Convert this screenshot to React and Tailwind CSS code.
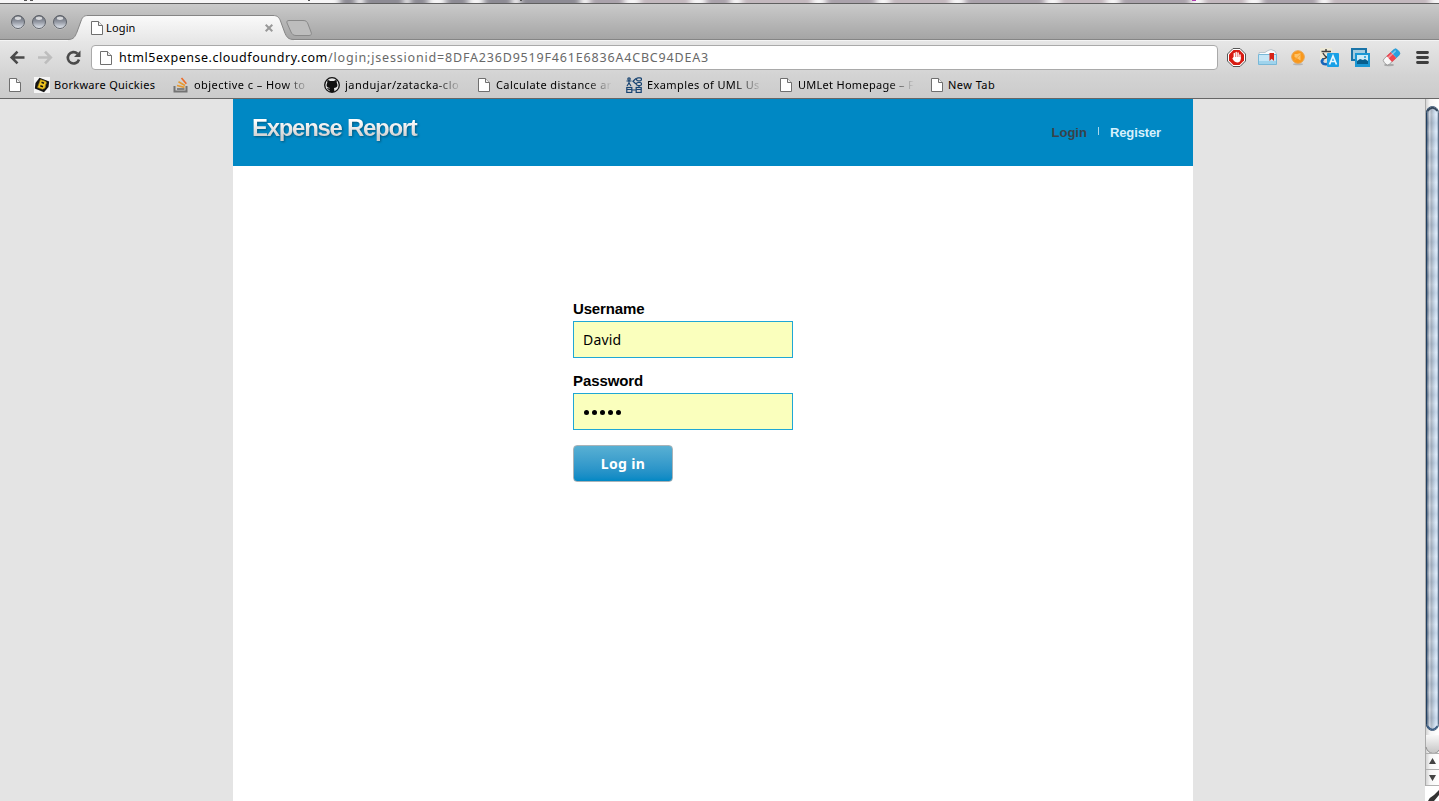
import React from "react";

const ui = "font-['Noto_Sans','Open_Sans',sans-serif]";

function Page({ className = "" }) {
  return (
    <svg width="12" height="14" viewBox="0 0 12 14" className={"shrink-0 " + className}>
      <path d="M.5 .5H7.5L11.5 4.5V13.5H.5Z" fill="#fff" stroke="#6f6f6f" />
      <path d="M7.5 .5V4.5H11.5" fill="#eee" stroke="#6f6f6f" />
    </svg>
  );
}

function Light({ id }) {
  return (
    <svg width="16" height="16" viewBox="0 0 16 16" className="shrink-0">
      <defs>
        <linearGradient id={id} x1="0" y1="0" x2="0" y2="1">
          <stop offset="0" stopColor="#5f646d" />
          <stop offset=".5" stopColor="#9499a4" />
          <stop offset="1" stopColor="#e6ebf2" />
        </linearGradient>
      </defs>
      <circle cx="8" cy="8.6" r="7" fill="#ddd" opacity=".6" />
      <circle cx="8" cy="8" r="6.500" fill={"url(#" + id + ")"} stroke="#5d6168" />
      <ellipse cx="8" cy="4.200" rx="3.200" ry="1.700" fill="#fff" opacity=".7" />
    </svg>
  );
}

function TabStrip() {
  return (
    <div className="relative flex h-[37px] shrink-0 items-start border-t border-[#606060] bg-linear-to-b from-[#cacaca] to-[#a4a4a4]">
      <svg className="absolute inset-0" width="1439" height="37" viewBox="0 0 1439 37">
        <defs>
          <linearGradient id="tab" x1="0" y1="0" x2="0" y2="1">
            <stop offset="0" stopColor="#fafafa" />
            <stop offset="1" stopColor="#e7e7e7" />
          </linearGradient>
        </defs>
        <path d="M0 35.5H1439" stroke="#858585" />
        <path d="M0 36.5H1439" stroke="#f4f4f4" />
        <path d="M68 37V35.5C74 35.5 75 32.5 77 28L81 17C82.5 13 84 11.5 88 11.5H273C277 11.5 279 13 280.5 17L284.500 28C286.500 33 288 35.500 294 35.500V37Z" fill="url(#tab)" />
        <path d="M68 35.500C74 35.500 75 32.500 77 28L81 17C82.500 13 84 11.500 88 11.500H273C277 11.500 279 13 280.500 17L284.500 28C286.500 33 288 35.500 294 35.500" fill="none" stroke="#858585" />
        <path d="M289 16.500H303C306 16.500 307 17.500 308 20L311 28C312 30.500 311 31.500 309 31.500H296C293 31.500 292 30 291 28L287 19C286.500 17.500 287 16.500 289 16.500Z" fill="#bdbdbd" stroke="#898989" />
      </svg>
      <div className="relative flex gap-[5px] pl-[10px] pt-[10px]">
        <Light id="l1" /><Light id="l2" /><Light id="l3" />
      </div>
      <div className={"relative flex h-[37px] items-center pl-[23px] pt-[11px] text-[11px] text-black " + ui}>
        <Page className="mb-px" />
        <span className="ml-[3px] w-[157px] leading-4 tracking-[0.150px]">Login</span>
        <svg width="10" height="10" viewBox="0 0 10 10" className="ml-px"><path d="M1.700 1.700L8.300 8.300M8.300 1.700L1.700 8.300" stroke="#999" strokeWidth="2" /></svg>
      </div>
    </div>
  );
}

function Extensions() {
  return (
    <svg width="221" height="36" viewBox="1218 40 221 36" className="shrink-0">
      <path d="M1233 48.500H1240L1245.500 54V61L1240 66.500H1233L1227.500 61V54Z" fill="#fff" stroke="#555" />
      <path d="M1233.500 50H1239.500L1244 54.500V60.500L1239.500 65H1233.500L1229 60.500V54.500Z" fill="#d81b12" />
      <path d="M1234.300 58V53.500M1236.200 57V52.500M1238.100 57V53M1240 58.500V55" stroke="#fff" strokeWidth="1.400" strokeLinecap="round" />
      <path d="M1233.600 57H1240.700V59.500C1240.500 61.500 1239 62.500 1237.500 62.500S1234 61.500 1232.300 58.500Z" fill="#fff" />
      <path d="M1259 54V52.500H1265L1268 50.500L1271 49.500L1275 51L1276.500 54V64.500H1259Z" fill="#fafcfe" stroke="#b9c5cc" />
      <path d="M1258.500 54.500H1276.500V64.500H1258.500Z" fill="#c6e6f6" stroke="#78b8d8" />
      <path d="M1259 61H1276V64H1259Z" fill="#9fd3ec" />
      <path d="M1269.500 53H1274V61L1271.700 58.800L1269.500 61Z" fill="#d72316" />
      <ellipse cx="1298" cy="64.200" rx="5" ry="1" fill="#b5b5b5" />
      <circle cx="1298" cy="57" r="6.300" fill="#f9981b" stroke="#eaa550" />
      <path d="M1294.500 54H1297L1300.500 53V60.500L1297.500 58.500L1294.500 57Z" fill="#fdc772" opacity=".9" />
      <path d="M1294.500 60L1301 54" stroke="#f9a83c" />
      <rect x="1320" y="48" width="12" height="12" fill="#ece8d8" />
      <path d="M1326 49V51M1321.500 51.500H1331M1323 53C1325 57 1327 58 1330 59M1329.500 53C1328 57 1325 59 1322 59" fill="none" stroke="#424242" strokeWidth="1.500" />
      <path d="M1323.500 59C1320.500 61 1322 65 1327 64" fill="none" stroke="#1764b8" strokeWidth="2.600" />
      <rect x="1327" y="53" width="12" height="14" rx="1" fill="#18a0e6" />
      <path d="M1329.500 64.500L1333 56L1336.500 64.500M1331 61.500H1335" fill="none" stroke="#e7f7ff" strokeWidth="1.700" />
      <rect x="1352" y="49" width="14" height="11" fill="#a5cde0" stroke="#1a74a8" strokeWidth="2" />
      <rect x="1355" y="53" width="15" height="14" fill="#1a97d4" />
      <rect x="1357" y="55" width="11" height="9" fill="#cdebf7" />
      <path d="M1357 64V61L1360 59L1363 60L1365 59L1368 61V64Z" fill="#075e8d" /><circle cx="1365" cy="57" r="1" fill="#159ad8" />
      <ellipse cx="1389" cy="65" rx="5" ry="1.200" fill="#aaa" />
      <g transform="rotate(-43 1391.500 57)">
        <rect x="1382.500" y="53.200" width="18" height="7.600" rx="2.500" fill="#f6f6f6" stroke="#949494" strokeWidth=".8" />
        <rect x="1388.500" y="53" width="6" height="8" fill="#ee4650" />
        <path d="M1394.500 53H1398.500Q1401 53 1401 55.500V58.500Q1401 61 1398.500 61H1394.500Z" fill="#27a1df" />
        <rect x="1384" y="54.500" width="15" height="1.500" rx=".7" fill="#fff" opacity=".4" />
      </g>
      <path d="M1417.500 52.500H1427.500M1417.500 57.500H1427.500M1417.500 62.500H1427.500" stroke="#3e3e3e" strokeWidth="2.800" strokeLinecap="round" />
    </svg>
  );
}

function Toolbar() {
  return (
    <div className="flex h-9 shrink-0 items-center bg-linear-to-b from-[#e7e7e7] to-[#d3d3d3]">
      <svg width="91" height="36" viewBox="0 0 91 36" className="shrink-0">
        <path d="M12.500 17.500H24.500M17.500 11.700L11.700 17.500L17.500 23.300" fill="none" stroke="#4a4a4a" strokeWidth="2.600" />
        <path d="M38 17.500H50M45 11.700L50.800 17.500L45 23.300" fill="none" stroke="#bdbdbd" strokeWidth="2.600" />
        <path d="M77.500 13.700A5.700 5.700 0 1 0 79 19.500" fill="none" stroke="#4a4a4a" strokeWidth="2.600" />
        <path d="M80.500 10.500V17H74Z" fill="#4a4a4a" />
      </svg>
      <div className={"mb-px flex h-[25px] w-[1127px] items-center rounded-[4px] border border-[#a9a9a9] bg-white pl-[8px] text-[12.5px] text-[#686868] " + ui}>
        <Page />
        <div className="ml-[7px] flex whitespace-nowrap pt-[2px]">
          <span className="w-[209px] tracking-[0.530px] text-black">html5expense.cloudfoundry.com</span>
          <span className="tracking-[0.820px]">/login;jsessionid=8DFA236D9519F461E6836A4CBC94DEA3</span>
        </div>
      </div>
      <Extensions />
    </div>
  );
}

const fade = "whitespace-nowrap [mask-image:linear-gradient(to_right,black_78%,transparent)]";

function Bookmarks() {
  return (
    <div className={"flex h-[23px] shrink-0 items-center border-b border-[#666] bg-linear-to-b from-[#d3d3d3] to-[#cbcbcb] pb-[4px] pl-[9px] text-[11px] leading-4 text-black " + ui}>
      <Page />
      <div className="flex w-[139px] items-center pl-[13px]">
        <svg width="16" height="16" viewBox="0 0 16 16" className="shrink-0">
          <rect width="16" height="16" fill="#f5f5f5" />
          <path d="M5.500 .8L15.200 4.500L14.500 10L10 15.200L.8 11.500L1.500 6Z" fill="#151515" />
          <path d="M6.500 2.500L11.500 4.300Q13.500 5.500 11.500 8Q12 11.800 8.500 12.300L3.500 10.500Z" fill="#f2c620" stroke="#8f7510" strokeWidth=".6" />
          <path d="M7.500 5.300L10 6.200M6.300 8.700L9 9.700" stroke="#151515" strokeWidth="1.600" />
        </svg>
        <span className="ml-[4px] whitespace-nowrap tracking-[0.300px]">Borkware Quickies</span>
      </div>
      <div className="flex w-[150px] items-center pl-[13px]">
        <svg width="16" height="16" viewBox="0 0 16 16" className="shrink-0">
          <path d="M1.500 9V14.500H13.500V9" fill="none" stroke="#737373" strokeWidth="2" />
          <path d="M4 12H11.500" stroke="#737373" strokeWidth="1.700" />
          <path d="M4 8.500L11.500 10.300M5.500 4.800L12 8.500" stroke="#e69a33" strokeWidth="1.700" />
          <path d="M8.500 1L13.300 6.800" stroke="#ec6c2a" strokeWidth="1.700" />
        </svg>
        <span className={"ml-[5px] w-[116px] tracking-[0.450px] " + fade}>objective c – How to</span>
      </div>
      <div className="flex w-[152px] items-center pl-[14px]">
        <svg width="16" height="16" viewBox="0 0 16 16" className="shrink-0">
          <circle cx="8" cy="8" r="7.300" fill="#e5e5e5" stroke="#111" strokeWidth="1.300" />
          <path d="M3.500 3Q5 3 6 4H10Q11 3 12.500 3Q13 4 12.700 5.500Q15 10.500 10 11L10.500 15H5.500V13Q3.500 13 3 11L5.500 11.500L6 11Q1 10.500 3.300 5.500Q3 4 3.500 3Z" fill="#111" />
        </svg>
        <span className={"ml-[5px] w-[117px] tracking-[0.500px] " + fade}>jandujar/zatacka-clo</span>
      </div>
      <div className="flex w-[150px] items-center pl-[16px]">
        <Page />
        <span className={"ml-[6px] w-[116px] tracking-[0.420px] " + fade}>Calculate distance ar</span>
      </div>
      <div className="flex w-[150px] items-center pl-[14px]">
        <svg width="16" height="16" viewBox="0 0 16 16" fill="none" stroke="#174371" strokeWidth="1.200" className="shrink-0">
          <circle cx="3" cy="2" r="1.200" /><path d="M3 3V6M.5 4H5.500M3 6L1 9M3 6L5 9M10 1.500L7 4.200L10 7" />
          <rect x="10.500" y=".8" width="5" height="3" rx="1.500" /><rect x="10.500" y="5.500" width="5" height="3" rx="1.500" />
          <rect x=".8" y="10.500" width="5" height="5" /><rect x="10.200" y="10.500" width="5" height="5" /><path d="M.8 12.500H5.800M10.200 12.500H15.200M6 13H10M13 9V10" />
        </svg>
        <span className={"ml-[5px] w-[116px] tracking-[0.400px] " + fade}>Examples of UML Us</span>
      </div>
      <div className="flex w-[152px] items-center pl-[18px]">
        <Page />
        <span className={"ml-[6px] w-[116px] tracking-[0.280px] " + fade}>UMLet Homepage – F</span>
      </div>
      <div className="flex items-center pl-[17px]">
        <Page />
        <span className="ml-[5px] tracking-[0.450px]">New Tab</span>
      </div>
    </div>
  );
}

function Scrollbar() {
  return (
    <svg width="14" height="702" viewBox="1425 99 14 702" className="shrink-0">
      <defs>
        <linearGradient id="track"><stop stopColor="#ccc" /><stop offset=".35" stopColor="#f5f5f5" /><stop offset="1" stopColor="#fff" /></linearGradient>
        <linearGradient id="thumb">
          <stop stopColor="#38516d" /><stop offset=".14" stopColor="#8795a7" /><stop offset=".25" stopColor="#c9d2dd" />
          <stop offset=".42" stopColor="#a9b4c2" /><stop offset=".6" stopColor="#bfcfe0" /><stop offset=".82" stopColor="#dfeeff" /><stop offset="1" stopColor="#8ca0b6" />
        </linearGradient>
        <linearGradient id="edge"><stop stopColor="#213f60" /><stop offset=".5" stopColor="#48617d" /><stop offset="1" stopColor="#5d7087" /></linearGradient>
        <linearGradient id="cap" x1="0" y1="0" x2="0" y2="1"><stop stopColor="#f8f8f8" /><stop offset="1" stopColor="#c4c4c4" /></linearGradient>
        <linearGradient id="wave" x1="0" y1="0" x2="0" y2="1">
          <stop stopColor="#4d6583" stopOpacity=".12" /><stop offset=".5" stopColor="#fff" stopOpacity=".12" /><stop offset="1" stopColor="#4d6583" stopOpacity=".12" />
        </linearGradient>
        <pattern id="ripple" x="0" y="106" width="1439" height="17" patternUnits="userSpaceOnUse">
          <rect width="1439" height="17" fill="url(#wave)" />
        </pattern>
      </defs>
      <rect x="1425" y="99" width="14" height="702" fill="url(#track)" />
      <path d="M1425.500 99V786" stroke="#aaa" />
      <path d="M1426 735H1439V751Q1432.500 757 1426 749Z" fill="url(#cap)" />
      <path d="M1426 747C1428 755 1437 755 1439 750" fill="none" stroke="#8e8e8e" />
      <rect x="1426.500" y="106.500" width="12" height="624" rx="6" fill="url(#thumb)" stroke="url(#edge)" />
      <rect x="1427" y="107" width="11" height="623" rx="5.500" fill="url(#ripple)" />
      <path d="M1427.500 111Q1432.500 104.500 1437.500 111" fill="none" stroke="#35485d" strokeWidth="2" />
      <path d="M1427.500 726Q1432.500 733 1437.500 726" fill="none" stroke="#3c5e84" strokeWidth="1.500" />
      <path d="M1426 753.500H1439M1426 769.500H1439M1426 785.500H1439" stroke="#b1b1b1" />
      <path d="M1429 764L1432.500 758L1436 764ZM1429 775H1436L1432.500 781Z" fill="#444" />
      <rect x="1425" y="786" width="14" height="15" fill="#fff" />
      <path d="M1428 801Q1430 797 1434 795L1439 790V795L1434 801Z" fill="#333" />
    </svg>
  );
}

const shadows = [[340, 16], [364, 40], [410, 18], [446, 22], [484, 28], [520, 60], [590, 34], [640, 50], [706, 24], [742, 70], [826, 50], [890, 60], [965, 80], [1060, 46], [1120, 70], [1204, 42], [1262, 56], [1330, 100]];

export default function App() {
  return (
    <div className="flex h-[801px] w-[1439px] flex-col overflow-hidden bg-[#e4e4e4]">
      <svg width="1439" height="3" viewBox="0 0 1439 3" className="shrink-0">
        <defs>
          <filter id="soft" filterUnits="userSpaceOnUse" x="0" y="-5" width="1439" height="13"><feGaussianBlur stdDeviation="3 .3" /></filter>
        </defs>
        <rect width="1439" height="3" fill="#f6f5f6" />
        <g filter="url(#soft)">
          {shadows.map(([x, w], i) => <rect key={x} x={x} y="-2" width={w} height="7" fill={i < 6 ? "#8d8b94" : i % 2 ? "#c3b8be" : "#aaa2ab"} />)}
        </g>
        <path d="M24 0H27M30 0H33M308 0H310M520 0H522" stroke="#555" strokeWidth="2" />
        <path d="M1192 .5H1196" stroke="#b03bb0" />
      </svg>
      <TabStrip />
      <Toolbar />
      <Bookmarks />
      <div className="flex min-h-0 flex-1 justify-between">
        <main className="ml-[233px] w-[960px] bg-white font-['Liberation_Sans',Arial,sans-serif]">
          <header className="flex h-[67px] items-start justify-between bg-[#0088c4] pl-[19px] pr-[32px]">
            <h1 className="mt-[14px] bg-linear-to-b from-white from-25% to-[#d0d0d0] to-80% bg-clip-text pr-[2px] text-[24px] font-bold leading-[30px] tracking-[-1.300px] text-transparent drop-shadow-[1px_1px_1px_rgba(0,0,0,0.35)]">Expense Report</h1>
            <nav className="mt-[25px] flex items-start text-[13px] font-bold leading-[18px]">
              <a className="text-[#39424a]">Login</a>
              <span className="ml-[11px] mr-[11px] mt-[3px] h-[8px] w-px bg-[#a9d6eb]" />
              <a className="tracking-[-0.120px] text-[#d6f0fc]">Register</a>
            </nav>
          </header>
          <form className="ml-[340px] mt-[134px] flex w-[220px] flex-col items-start">
            <label className="h-[21px] text-[15px] font-bold leading-[18px] tracking-[-0.150px]">Username</label>
            <div className={"flex h-[37px] w-full items-center border border-[#1fa7d5] bg-[#faffbd] pl-[9px] text-[14px] tracking-[0.200px] text-black " + ui}>David</div>
            <label className="mt-[14px] h-[21px] text-[15px] font-bold leading-[18px] tracking-[-0.100px]">Password</label>
            <div className="flex h-[37px] w-full items-center gap-[3px] border border-[#1fa7d5] bg-[#faffbd] pl-[10px] pt-[2px]">
              {[0, 1, 2, 3, 4].map((n) => <i key={n} className="size-[5px] rounded-full bg-black" />)}
            </div>
            <button type="button" className="mt-[15px] flex h-[37px] w-[100px] items-center justify-center rounded-[4px] border border-[#a9b3b8] bg-linear-to-b from-[#58b0d3] to-[#0088c4] font-['Noto_Sans',sans-serif] text-[14px] font-bold tracking-[0.350px] text-white">Log in</button>
          </form>
        </main>
        <Scrollbar />
      </div>
    </div>
  );
}
